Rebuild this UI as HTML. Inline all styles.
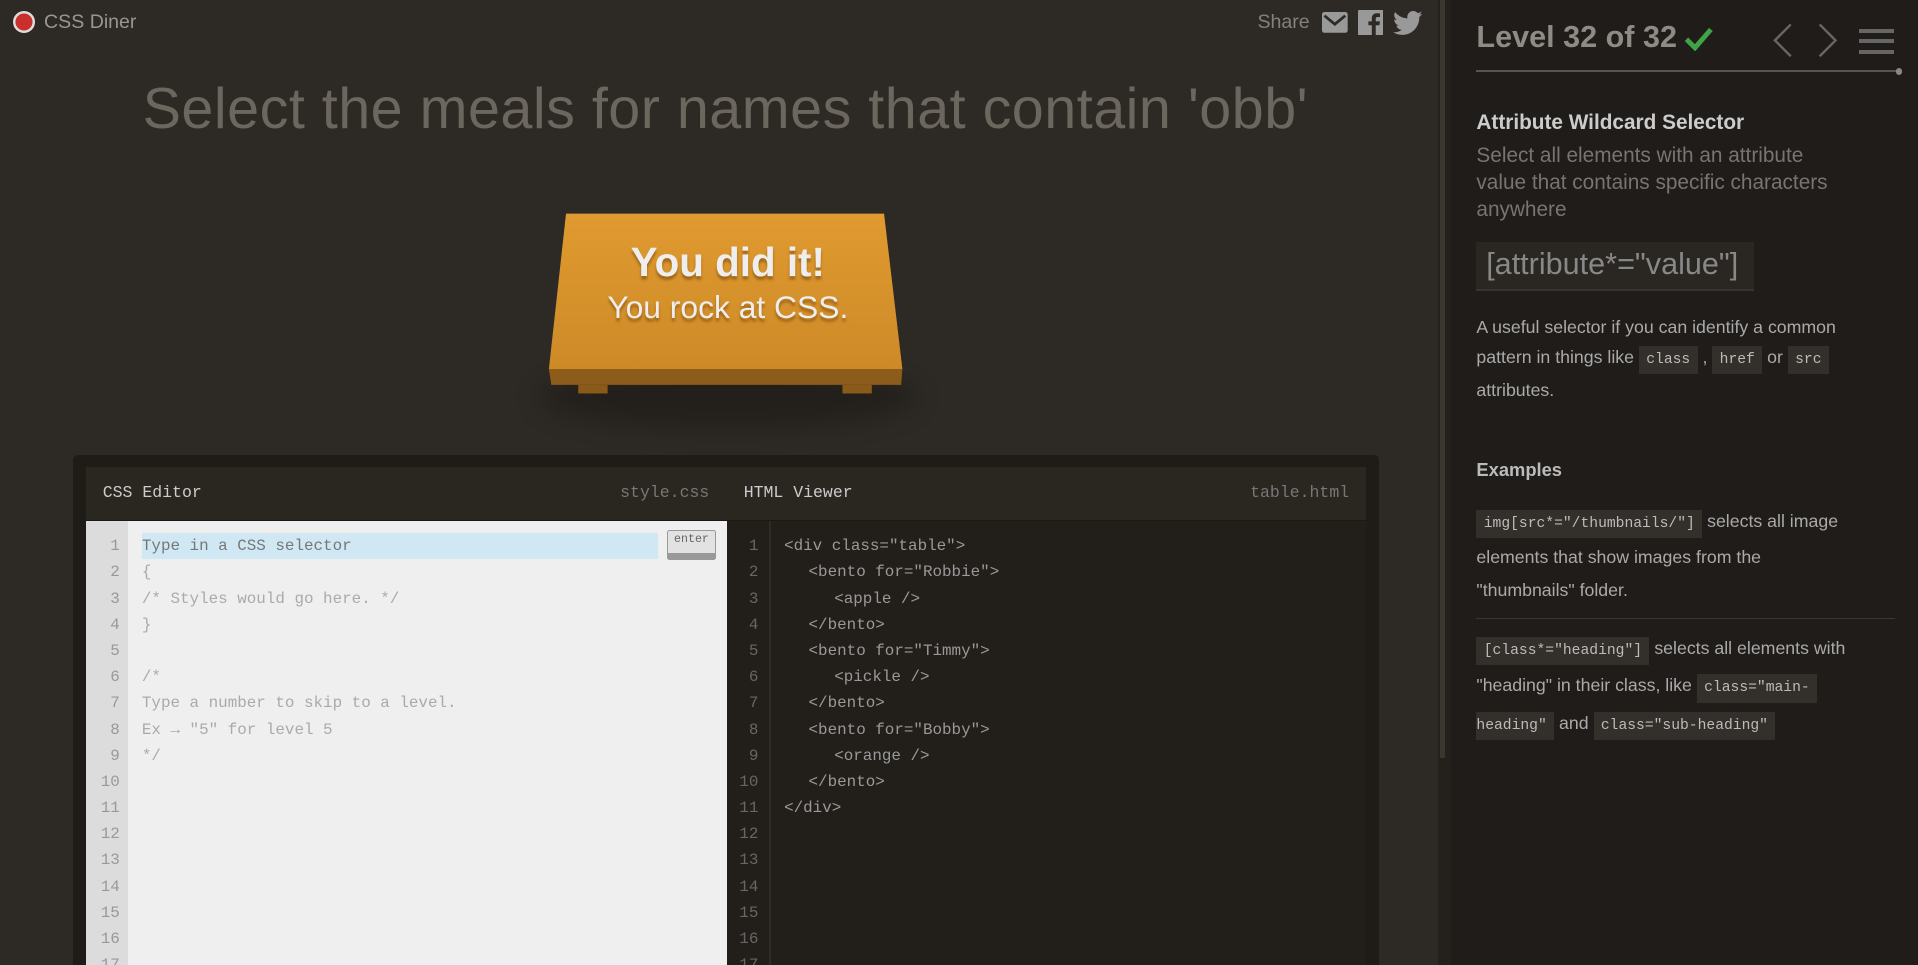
<!DOCTYPE html>
<html style="background:#2d2924"><head><meta charset="utf-8"><style>
html{zoom:1.22321;overflow:hidden}
body{margin:0;width:1568px;height:789px;overflow:hidden;background:#2d2924;font-family:"Liberation Sans",sans-serif;position:relative}
.a{position:absolute;white-space:nowrap}
.mono{font-family:"Liberation Mono",monospace}
.ln{position:absolute;font-family:"Liberation Mono",monospace;font-size:13px;line-height:21.4px}
code{font-family:"Liberation Mono",monospace;font-size:12px;background:#33302b;color:#bbb;padding:5px 6px;}
.i1{padding-left:20px}.i2{padding-left:41px}
</style></head><body>
<div class="a" style="left:11px;top:9px;width:18px;height:18px;border-radius:50%;background:#c9302c;box-shadow:inset 0 0 0 2px #ddd"></div>
<div class="a" style="left:36px;top:9px;font-size:16px;color:#9a968f">CSS Diner</div>
<div class="a" style="left:1028px;top:9px;font-size:16px;color:#858079">Share</div>
<svg class="a" style="left:1081px;top:10px" width="21" height="17" viewBox="0 0 21 17"><rect x="0" y="0" width="21" height="17" rx="2" fill="#999"/><path d="M2 3 L10.5 10 L19 3" stroke="#2d2924" stroke-width="2.2" fill="none"/></svg>
<svg class="a" style="left:1110px;top:8px" width="21" height="21" viewBox="0 0 21 21"><rect width="21" height="21" rx="1" fill="#999"/><path d="M14.5 21 V12.5 H17.5 L18 9.3 H14.5 V7.3 C14.5 6.3 14.9 5.7 16.2 5.7 H18 V2.9 C17.5 2.8 16.5 2.7 15.4 2.7 C12.9 2.7 11.3 4.2 11.3 7 V9.3 H8.5 V12.5 H11.3 V21 Z" fill="#2d2924"/></svg>
<svg class="a" style="left:1139px;top:9px" width="24" height="20" viewBox="0 0 24 20"><path d="M24 2.4c-.9.4-1.8.6-2.8.8 1-.6 1.8-1.6 2.2-2.700-1 .6-2 1-3.100 1.200C19.3.7 18 0 16.6 0c-2.7 0-4.9 2.2-4.9 4.9 0 .4 0 .8.1 1.1C7.7 5.8 4.1 3.9 1.7.9c-.4.7-.7 1.600-.7 2.500 0 1.700.9 3.200 2.200 4.100-.8 0-1.600-.2-2.200-.6v.1c0 2.400 1.700 4.400 3.900 4.800-.4.1-.8.2-1.300.2-.3 0-.6 0-.9-.1.6 2 2.400 3.400 4.600 3.400-1.700 1.300-3.800 2.100-6.100 2.100-.4 0-.8 0-1.200-.1 2.200 1.400 4.800 2.200 7.500 2.200 9.100 0 14-7.500 14-14v-.6c1-.7 1.800-1.600 2.500-2.500z" fill="#999"/></svg>
<div class="a" style="left:0;width:1186px;top:62px;text-align:center;font-size:47px;color:#6b675f;letter-spacing:0.4px">Select the meals for names that contain 'obb'</div>
<div class="a" style="left:440px;top:300px;width:310px;height:50px;border-radius:50%;background:rgba(0,0,0,0.22);filter:blur(10px)"></div>
<svg class="a" style="left:445px;top:172px" width="300" height="155" viewBox="445 172 300 155">
<defs><linearGradient id="g" x1="0" y1="0" x2="0" y2="1"><stop offset="0" stop-color="#e09a30"/><stop offset="1" stop-color="#cd8a27"/></linearGradient></defs>
<polygon points="463,175 723,175 738,302 449,302" fill="url(#g)"/>
<polygon points="449,302 738,302 737,315 451,315" fill="#8c5c1a"/>
<rect x="473" y="315" width="24" height="7" fill="#8a5a18"/>
<rect x="689" y="315" width="24" height="7" fill="#8a5a18"/>
</svg>
<div class="a" style="left:445px;width:300px;top:195px;text-align:center;font-size:33px;font-weight:bold;color:#eee;text-shadow:0 3px 2px rgba(120,70,10,0.6)">You did it!</div>
<div class="a" style="left:445px;width:300px;top:236px;text-align:center;font-size:26px;color:#eee;text-shadow:0 3px 2px rgba(120,70,10,0.6)">You rock at CSS.</div>
<div class="a" style="left:60px;top:372px;width:1067px;height:417px;background:#1f1c18;border-radius:4px 4px 0 0"></div>
<div class="a" style="left:70px;top:382px;width:1047px;height:43px;background:#2a2620;border-bottom:1px solid #1c1915"></div>
<div class="a mono" style="left:84px;top:395px;font-size:13.5px;color:#ccc">CSS Editor</div>
<div class="a mono" style="left:507px;top:395px;font-size:13.5px;color:#777">style.css</div>
<div class="a mono" style="left:608px;top:395px;font-size:13.5px;color:#ccc">HTML Viewer</div>
<div class="a mono" style="left:1022px;top:395px;font-size:13.5px;color:#777">table.html</div>
<div class="a" style="left:70px;top:426px;width:524px;height:363px;background:#efefef;overflow:hidden">
<div style="position:absolute;left:0;top:0;width:35px;height:363px;background:#dcdcdc"></div>
<div style="position:absolute;left:46px;top:10px;width:422px;height:21px;background:#cfe8f3"></div>
<div class="mono" style="position:absolute;left:475px;top:7px;width:39px;height:18px;background:#e2e2e2;border:1px solid #999;border-bottom:6px solid #999;border-radius:2px;font-size:9.5px;color:#666;text-align:center;line-height:15px">enter</div>
<div class="ln" style="left:0;top:10px;width:28px;text-align:right;color:#999">1<br>2<br>3<br>4<br>5<br>6<br>7<br>8<br>9<br>10<br>11<br>12<br>13<br>14<br>15<br>16<br>17</div>
<div class="ln" style="left:46px;top:10px;color:#aaa;white-space:nowrap"><span style="color:#777">Type in a CSS selector</span><br>{<br>/* Styles would go here. */<br>}<br><br>/*<br>Type a number to skip to a level.<br>Ex → "5" for level 5<br>*/</div>
</div>
<div class="a" style="left:594px;top:426px;width:523px;height:363px;background:#221f1b;overflow:hidden">
<div style="position:absolute;left:35px;top:0;width:1px;height:363px;background:#2e2a25"></div>
<div class="ln" style="left:0;top:10px;width:26px;text-align:right;color:#666">1<br>2<br>3<br>4<br>5<br>6<br>7<br>8<br>9<br>10<br>11<br>12<br>13<br>14<br>15<br>16<br>17</div>
<div class="ln" style="left:47px;top:10px;color:#999;white-space:nowrap"><div>&lt;div class="table"&gt;</div><div class="i1">&lt;bento for="Robbie"&gt;</div><div class="i2">&lt;apple /&gt;</div><div class="i1">&lt;/bento&gt;</div><div class="i1">&lt;bento for="Timmy"&gt;</div><div class="i2">&lt;pickle /&gt;</div><div class="i1">&lt;/bento&gt;</div><div class="i1">&lt;bento for="Bobby"&gt;</div><div class="i2">&lt;orange /&gt;</div><div class="i1">&lt;/bento&gt;</div><div>&lt;/div&gt;</div></div>
</div>
<div class="a" style="left:1176px;top:0;width:10px;height:789px;background:#24211d"></div>
<div class="a" style="left:1177px;top:0;width:4px;height:620px;background:#3a3630"></div>
<div class="a" style="left:1186px;top:0;width:382px;height:789px;background:#1f1c19"></div>
<div class="a" style="left:1207px;top:16px;font-size:25px;font-weight:bold;color:#8f8b84">Level 32 of 32</div>
<svg class="a" style="left:1377px;top:22px" width="24" height="20" viewBox="0 0 24 20"><path d="M2 10 L9 17 L22 2" stroke="#3fa445" stroke-width="4" fill="none"/></svg>
<svg class="a" style="left:1447px;top:18px" width="20" height="30"><path d="M17 2 L4 15 L17 28" stroke="#666" stroke-width="2" fill="none"/></svg>
<svg class="a" style="left:1485px;top:18px" width="20" height="30"><path d="M3 2 L16 15 L3 28" stroke="#666" stroke-width="2" fill="none"/></svg>
<div class="a" style="left:1520px;top:24px;width:28px;height:3px;background:#666"></div>
<div class="a" style="left:1520px;top:32px;width:28px;height:3px;background:#666"></div>
<div class="a" style="left:1520px;top:41px;width:28px;height:3px;background:#666"></div>
<div class="a" style="left:1207px;top:57px;width:345px;height:2px;background:#555"></div>
<div class="a" style="left:1550px;top:56px;width:5px;height:5px;border-radius:50%;background:#888"></div>
<div class="a" style="left:1207px;top:91px;font-size:17px;font-weight:bold;color:#ccc">Attribute Wildcard Selector</div>
<div class="a" style="left:1207px;top:117px;font-size:17px;line-height:22px;color:#787470">Select all elements with an attribute<br>value that contains specific characters<br>anywhere</div>
<div class="a" style="left:1207px;top:198px;width:227px;height:38px;background:#2a2621;border-bottom:2px solid #38342e"></div>
<div class="a" style="left:1215px;top:202px;font-size:25px;color:#888">[attribute*="value"]</div>
<div class="a" style="left:1207px;top:256px;font-size:14.5px;line-height:24.5px;color:#aaa">A useful selector if you can identify a common<br>pattern in things like <code>class</code> , <code>href</code> or <code>src</code><br>attributes.</div>
<div class="a" style="left:1207px;top:375px;font-size:15px;font-weight:bold;color:#bbb">Examples</div>
<div class="a" style="left:1207px;top:413px;font-size:14.5px;line-height:27px;color:#aaa"><code>img[src*="/thumbnails/"]</code> selects all image<br>elements that show images from the<br>"thumbnails" folder.</div>
<div class="a" style="left:1207px;top:505px;width:342px;height:1px;background:#3a3631"></div>
<div class="a" style="left:1207px;top:516px;font-size:14.5px;line-height:28px;color:#aaa"><code>[class*="heading"]</code> selects all elements with<br>"heading" in their class, like <code>class="main-</code><br><code style="padding-left:0">heading"</code> and <code>class="sub-heading"</code></div>
</body></html>
